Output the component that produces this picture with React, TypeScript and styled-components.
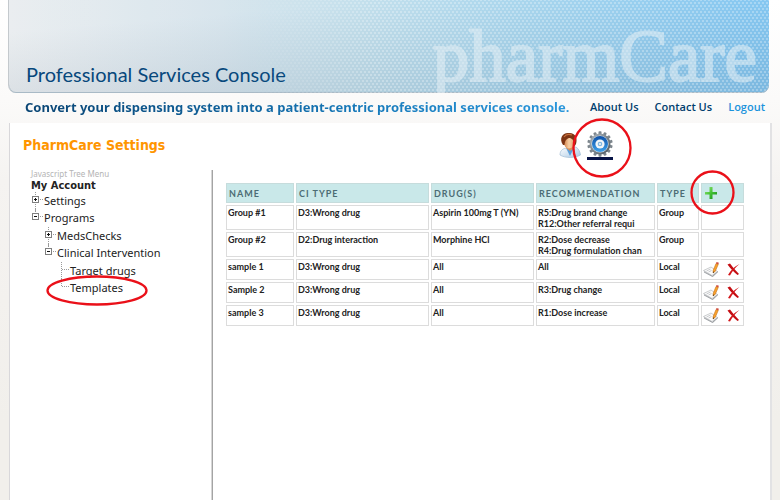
import React from "react";
import styled, { createGlobalStyle, css } from "styled-components";

const GlobalStyle = createGlobalStyle`
  *, *::before, *::after { box-sizing: border-box; }
  body { margin: 0; font-family: "Noto Sans", Verdana, sans-serif; color: #222; }
  ul { list-style: none; margin: 0; padding: 0; }
  a { color: inherit; text-decoration: none; }
  button { border: 0; padding: 0; background: none; cursor: pointer; font: inherit; }
`;

const Page = styled.div`
  display: flex;
  flex-direction: column;
  min-height: 100vh;
  padding: 0 8px;
  background: linear-gradient(180deg, #ffffff 0, #fbfaf9 100px, #f5f3f1 180px, #f1efeb 420px);
`;

const Banner = styled.header`
  position: relative;
  display: flex;
  justify-content: space-between;
  align-items: flex-end;
  height: 93px;
  margin-right: 3px;
  overflow: hidden;
  border-radius: 0 0 8px 8px;
  border-left: 1px solid #c4c9cd;
  box-shadow: inset 0 -1px 0 #a9bac6;
  background:
    linear-gradient(175deg, rgba(255, 255, 255, 0.12) 20%, rgba(130, 145, 160, 0.27) 100%),
    linear-gradient(90deg, #e7ebee 0, #d3e2eb 28%, #bcdcea 46%, #9fd3ee 68%, #78c6f7 100%);

  &::before {
    content: "";
    position: absolute;
    inset: 0;
    background-image:
      radial-gradient(circle, rgba(255, 255, 255, 0.28) 0, rgba(255, 255, 255, 0.28) 1px, transparent 1px),
      radial-gradient(circle, rgba(255, 255, 255, 0.28) 0, rgba(255, 255, 255, 0.28) 1px, transparent 1px);
    background-size: 4px 6px;
    background-position: 0 0, 2px 3px;
    mask-image: linear-gradient(90deg, transparent 31%, #000 48%);
  }
`;

const BannerTitle = styled.h1`
  margin: 0;
  padding: 0 0 7px 17px;
  font: 400 20px/24px Lato, "Trebuchet MS", sans-serif;
  color: #07487c;
  white-space: nowrap;
`;

const Wordmark = styled.span`
  padding-right: 12px;
  font: 400 73px/73px "Liberation Serif", Georgia, serif;
  color: #e4eff5;
  -webkit-text-stroke: 2px #e4eff5;
  opacity: 0.55;
`;

const TopBar = styled.div`
  display: flex;
  flex-wrap: wrap;
  justify-content: space-between;
  align-items: center;
  min-height: 30px;
  padding: 0 7px 2px 17px;
`;

const Tagline = styled.p`
  margin: 0;
  font-weight: 700;
  font-size: 13px;
  line-height: 18px;
  color: transparent;
  background: linear-gradient(90deg, #0a4574 0, #0f5f98 35%, #1678b8 60%, #2b97dc 100%);
  background-clip: text;
  -webkit-background-clip: text;
`;

const TopNav = styled.nav`
  display: flex;
  gap: 16px;
  font: 600 11px/16px "Open Sans", Tahoma, sans-serif;
  -webkit-font-smoothing: antialiased;
`;

const NavLink = styled.a<{ $bright?: boolean }>`
  color: ${(p) => (p.$bright ? "#1c93dc" : "#003e6e")};
`;

const Panel = styled.main`
  flex: 1;
  display: flex;
  flex-direction: column;
  margin-left: 1px;
  border-left: 1px solid #d8d7da;
  border-right: 2px solid #e2e2e4;
  background: #fff;
`;

const PanelHeader = styled.div`
  display: flex;
  justify-content: space-between;
  align-items: flex-start;
  height: 47px;
  padding: 8px 157px 0 13px;
`;

const PanelTitle = styled.h2`
  margin: 0;
  padding-top: 5px;
  font: 700 14px/18px "DejaVu Sans Condensed", "DejaVu Sans", Tahoma, sans-serif;
  font-stretch: condensed;
  color: #ff9500;
`;

const Tools = styled.div`
  display: flex;
  gap: 4px;
`;

const ToolButton = styled.button<{ $active?: boolean }>`
  position: relative;
  display: flex;
  width: 26px;
  height: 29px;
  border-bottom: 3px solid ${(p) => (p.$active ? "#071346" : "transparent")};
`;

const Columns = styled.div`
  flex: 1;
  display: flex;
`;

const Sidebar = styled.aside`
  flex: 0 0 203px;
  padding-left: 21px;
  border-right: 1px solid #a4a4a4;
  box-shadow: inset -1px 0 0 #d6d6d6;
`;

const SideCaption = styled.div`
  font-size: 8px;
  line-height: 8px;
  color: #b4b4b4;
`;

const SideTitle = styled.h3`
  margin: 0;
  font: 700 11px/14px "DejaVu Sans Condensed", "DejaVu Sans", Verdana, sans-serif;
  padding-top: 1px;
`;

const TreeList = styled.ul<{ $nested?: boolean }>`
  ${(p) => p.$nested && css`
    padding: 1px 0 0 13px;
  `}
`;

const TreeRow = styled.div`
  position: relative;
  display: flex;
  width: max-content;
  height: 17px;
  font-size: 11px;
  line-height: 15px;
`;

const TreeToggle = styled.button`
  display: flex;
`;

const BranchSvg = styled.svg`
  display: block;
  overflow: visible;
`;

const Content = styled.section`
  flex: 1;
  min-width: 0;
  padding: 11px 24px 0 11px;
`;

const Table = styled.table`
  width: 100%;
  table-layout: fixed;
  border-collapse: separate;
  border-spacing: 2px;
  font: 700 9px/11px Lato, "Trebuchet MS", sans-serif;
`;

const Col = styled.col<{ $width?: number }>`
  ${(p) => p.$width && `width: ${p.$width}px;`}
`;

const HeadCell = styled.th`
  position: relative;
  height: 20px;
  padding: 0 2px;
  border: 1px solid #c6dcdc;
  background: #c9e8e9;
  color: #4c6c74;
  text-align: left;
  letter-spacing: 1px;
  text-transform: uppercase;
`;

const Cell = styled.td`
  height: 21px;
  padding: 1px 1px 0;
  border: 1px solid #dcdcdc;
  vertical-align: top;
  color: #222;
`;

const Line = styled.div`
  white-space: nowrap;
`;

const Actions = styled.div`
  display: flex;
  gap: 6px;
`;

const IconButton = styled.button`
  position: relative;
  display: flex;
`;

const Ring = styled.svg<{ $w: number; $h: number; $dx?: number; $dy?: number }>`
  position: absolute;
  z-index: 2;
  pointer-events: none;
  width: ${(p) => p.$w}px;
  height: ${(p) => p.$h}px;
  left: calc(50% - ${(p) => p.$w / 2 - (p.$dx ?? 0)}px);
  top: calc(50% - ${(p) => p.$h / 2 - (p.$dy ?? 0)}px);
`;

function Highlight({ w, h, dx, dy }: { w: number; h: number; dx?: number; dy?: number }) {
  return (
    <Ring $w={w} $h={h} $dx={dx} $dy={dy} aria-hidden="true">
      <ellipse cx={w / 2} cy={h / 2} rx={w / 2 - 1.5} ry={h / 2 - 1.5} fill="none" stroke="#ea1019" strokeWidth="2.300" />
    </Ring>
  );
}

function PersonIcon() {
  return (
    <svg width="24" height="27" viewBox="0 0 24 27" aria-hidden="true">
      <defs>
        <linearGradient id="skin" x1="0" x2="1">
          <stop offset="0" stopColor="#d07a40" />
          <stop offset="0.500" stopColor="#f8cfa4" />
          <stop offset="1" stopColor="#e0a06c" />
        </linearGradient>
        <linearGradient id="coat" x1="0" y1="0" x2="1" y2="1">
          <stop offset="0" stopColor="#ffffff" />
          <stop offset="1" stopColor="#a9c8e4" />
        </linearGradient>
      </defs>
      <path d="M3 24c0-4 2-6 6-7l10-1c3 2 4 5 4.500 8-5 3-15 3.500-20.500 0z" fill="url(#coat)" stroke="#9fbbd4" strokeWidth="0.700" />
      <path d="M9 17l4 8 4-8-4 2z" fill="#5b9fd9" />
      <path d="M9 14h8v3l-4 3-4-3z" fill="#d98d58" />
      <ellipse cx="12" cy="10.500" rx="5.500" ry="7" fill="url(#skin)" />
      <path d="M6 14C2 8 5 2 11 2c7-1 10 5 8 11-1 2-2 3-2 1 0-4-1-6-4-7-3 0-5 2-5.500 7z" fill="#7c3414" />
      <path d="M7 6c2-3 5-3 8-2" stroke="#c9703c" strokeWidth="1.200" fill="none" />
    </svg>
  );
}

function GearIcon() {
  const teeth = Array.from({ length: 14 }, (_, i) => (i * 360) / 14);
  return (
    <svg width="26" height="26" viewBox="0 0 26 26" aria-hidden="true">
      <defs>
        <linearGradient id="steel" x1="0" y1="0" x2="1" y2="1">
          <stop offset="0" stopColor="#b3bbc1" />
          <stop offset="0.500" stopColor="#7b858c" />
          <stop offset="1" stopColor="#4d565d" />
        </linearGradient>
        <linearGradient id="blue" x1="0" y1="0" x2="0" y2="1">
          <stop offset="0" stopColor="#0c4fa6" />
          <stop offset="1" stopColor="#3fa2ec" />
        </linearGradient>
      </defs>
      {teeth.map((a) => (
        <rect key={a} x="11.500" y="0.300" width="3" height="5" rx="0.800" fill="#7d868d" transform={`rotate(${a} 13 13)`} />
      ))}
      <circle cx="13" cy="13" r="10.500" fill="url(#steel)" />
      <circle cx="13" cy="13" r="8.600" fill="#dfe6eb" />
      <circle cx="13" cy="13" r="8" fill="url(#blue)" />
      <circle cx="13" cy="13" r="4.600" fill="#f1f5f8" />
      <circle cx="13" cy="13" r="2.300" fill="#7fb6e2" />
      <circle cx="13" cy="13" r="1.100" fill="#eef5fa" />
    </svg>
  );
}

function PlusIcon() {
  return (
    <svg width="14" height="14" viewBox="0 0 14 14" aria-hidden="true">
      <defs>
        <linearGradient id="leafGreen" x1="0" y1="0" x2="1" y2="1">
          <stop offset="0" stopColor="#9be67a" />
          <stop offset="0.500" stopColor="#43c233" />
          <stop offset="1" stopColor="#15871b" />
        </linearGradient>
      </defs>
      <path d="M5.500 1h3v5H13v2.500H8.500V13h-3V8.500H1V6h4.500z" fill="url(#leafGreen)" />
    </svg>
  );
}

function EditIcon() {
  return (
    <svg width="18" height="17" viewBox="0 0 18 17" aria-hidden="true">
      <path d="M0.500 10.500L7 7.500l8 3.500-5 5z" fill="#d3d5d8" />
      <path d="M0.500 9.500L8 6l6.500 4.500-5.500 4z" fill="#fbfbfb" stroke="#b4b7ba" strokeWidth="0.700" />
      <path d="M1 11l8.500 4.500 5.500-5" fill="none" stroke="#8d9094" strokeWidth="0.800" />
      <path d="M3.500 10l4-2M5.500 11l3-1.500" stroke="#b5b8bc" strokeWidth="0.700" />
      <path d="M13 2.500l2.300.8-3 7-2.300 1.700.2-2.700z" fill="#f8a12e" stroke="#b9650c" strokeWidth="0.500" />
      <path d="M13 2.500l.5-1.500 2.400.8-.6 1.500z" fill="#cf4a3b" />
      <path d="M10 12l.1-1.500 1.100.6z" fill="#222" />
    </svg>
  );
}

function DeleteIcon() {
  return (
    <svg width="13" height="17" viewBox="0 0 13 17" aria-hidden="true">
      <path d="M0.500 3.500L3 2.500C5.500 6 8.500 9.500 12 13l-1.500 1C7 11 3.500 8 0.500 3.500z" fill="#c40d12" />
      <path d="M12.500 3C8.500 6 5.500 10 3 14.500L1 14C3.500 9.500 7 5.500 12.500 3z" fill="#d3161a" />
    </svg>
  );
}

type Kind = "plus" | "minus" | "leaf";

function Branch({ kind, last }: { kind: Kind; last?: boolean }) {
  return (
    <BranchSvg width="13" height="17" viewBox="0 0 13 17" aria-hidden="true" shapeRendering="crispEdges">
      <path d={`M4.500 -1V${last ? 7 : 18}`} stroke="#9a9a9a" strokeDasharray="1 1" />
      <path d="M5 6.500H12" stroke="#9a9a9a" strokeDasharray="1 1" />
      {kind !== "leaf" && (
        <>
          <rect x="1.500" y="3.500" width="6" height="6" fill="#fff" stroke="#7f7f7f" />
          <path d={kind === "plus" ? "M3 6.500h3M4.500 5v3" : "M3 6.500h3"} stroke="#111" />
        </>
      )}
    </BranchSvg>
  );
}

type Node = { label: string; kind: Kind; marked?: boolean; children?: Node[] };

const tree: Node[] = [
  { label: "Settings", kind: "plus" },
  {
    label: "Programs",
    kind: "minus",
    children: [
      { label: "MedsChecks", kind: "plus" },
      {
        label: "Clinical Intervention",
        kind: "minus",
        children: [
          { label: "Target drugs", kind: "leaf" },
          { label: "Templates", kind: "leaf", marked: true },
        ],
      },
    ],
  },
];

function Tree({ nodes, nested }: { nodes: Node[]; nested?: boolean }) {
  return (
    <TreeList $nested={nested}>
      {nodes.map((n, i) => {
        const branch = <Branch kind={n.kind} last={i === nodes.length - 1} />;
        return (
          <li key={n.label}>
            <TreeRow>
              {n.kind === "leaf" ? branch : <TreeToggle aria-label={`Toggle ${n.label}`} aria-expanded={n.kind === "minus"}>{branch}</TreeToggle>}
              <a href="#">{n.label}</a>
              {n.marked && <Highlight w={102} h={31} dx={7} dy={2} />}
            </TreeRow>
            {n.children && <Tree nodes={n.children} nested />}
          </li>
        );
      })}
    </TreeList>
  );
}

type Row = { name: string; ci: string; drug: string; rec: string[]; type: string };

const rows: Row[] = [
  { name: "Group #1", ci: "D3:Wrong drug", drug: "Aspirin 100mg T (YN)", rec: ["R5:Drug brand change", "R12:Other referral requi"], type: "Group" },
  { name: "Group #2", ci: "D2:Drug interaction", drug: "Morphine HCl", rec: ["R2:Dose decrease", "R4:Drug formulation chan"], type: "Group" },
  { name: "sample 1", ci: "D3:Wrong drug", drug: "All", rec: ["All"], type: "Local" },
  { name: "Sample 2", ci: "D3:Wrong drug", drug: "All", rec: ["R3:Drug change"], type: "Local" },
  { name: "sample 3", ci: "D3:Wrong drug", drug: "All", rec: ["R1:Dose increase"], type: "Local" },
];

export default function App() {
  return (
    <>
      <GlobalStyle />
      <Page>
        <Banner>
          <BannerTitle>Professional Services Console</BannerTitle>
          <Wordmark>pharmCare</Wordmark>
        </Banner>
        <TopBar>
          <Tagline>Convert your dispensing system into a patient-centric professional services console.</Tagline>
          <TopNav>
            <NavLink href="#">About Us</NavLink>
            <NavLink href="#">Contact Us</NavLink>
            <NavLink href="#" $bright>Logout</NavLink>
          </TopNav>
        </TopBar>
        <Panel>
          <PanelHeader>
            <PanelTitle>PharmCare Settings</PanelTitle>
            <Tools>
              <ToolButton aria-label="Profile"><PersonIcon /></ToolButton>
              <ToolButton aria-label="Settings" $active>
                <GearIcon />
                <Highlight w={60} h={60} dx={2} dy={4} />
              </ToolButton>
            </Tools>
          </PanelHeader>
          <Columns>
            <Sidebar>
              <SideCaption>Javascript Tree Menu</SideCaption>
              <SideTitle>My Account</SideTitle>
              <Tree nodes={tree} />
            </Sidebar>
            <Content>
              <Table>
                <colgroup>
                  <Col $width={68} />
                  <Col $width={133} />
                  <Col $width={103} />
                  <Col />
                  <Col $width={42} />
                  <Col $width={43} />
                </colgroup>
                <thead>
                  <tr>
                    <HeadCell>Name</HeadCell>
                    <HeadCell>CI Type</HeadCell>
                    <HeadCell>Drug(s)</HeadCell>
                    <HeadCell>Recommendation</HeadCell>
                    <HeadCell>Type</HeadCell>
                    <HeadCell>
                      <IconButton aria-label="Add template">
                        <PlusIcon />
                        <Highlight w={45} h={45} dx={1} dy={-1} />
                      </IconButton>
                    </HeadCell>
                  </tr>
                </thead>
                <tbody>
                  {rows.map((r) => (
                    <tr key={r.name}>
                      <Cell>{r.name}</Cell>
                      <Cell>{r.ci}</Cell>
                      <Cell>{r.drug}</Cell>
                      <Cell>{r.rec.map((t) => <Line key={t}>{t}</Line>)}</Cell>
                      <Cell>{r.type}</Cell>
                      <Cell>
                        {r.type === "Local" && (
                          <Actions>
                            <IconButton aria-label={`Edit ${r.name}`}><EditIcon /></IconButton>
                            <IconButton aria-label={`Delete ${r.name}`}><DeleteIcon /></IconButton>
                          </Actions>
                        )}
                      </Cell>
                    </tr>
                  ))}
                </tbody>
              </Table>
            </Content>
          </Columns>
        </Panel>
      </Page>
    </>
  );
}
